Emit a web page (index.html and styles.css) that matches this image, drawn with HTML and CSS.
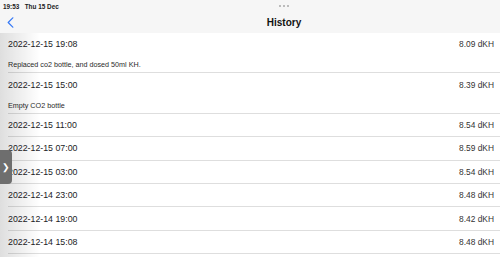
FILE: index.html
```html
<!DOCTYPE html>
<html lang="en">
<head>
  <meta charset="UTF-8">
  <meta name="viewport" content="width=device-width, initial-scale=1.0">
  <title>History</title>
  <link rel="stylesheet" href="styles.css">
</head>
<body>
  <header class="topbar">
    <div class="status">
      <span class="clock">19:53&nbsp;&nbsp;&nbsp;Thu 15 Dec</span>
      <span class="dots"><i></i><i></i><i></i></span>
    </div>
    <nav class="nav">
      <a class="back" href="#">
        <svg width="7" height="11" viewBox="0 0 7 11">
          <path d="M5.8 0.8 L1.2 5.5 L5.8 10.2" fill="none" stroke="#3478f6" stroke-width="1.2" stroke-linecap="round" stroke-linejoin="round"/>
        </svg>
      </a>
      <h1 class="title">History</h1>
    </nav>
  </header>

  <main class="list">
    <div class="row">
      <div class="main"><span class="date">2022-12-15 19:08</span><span class="value">8.09 dKH</span></div>
      <div class="note">Replaced co2 bottle, and dosed 50ml KH.</div>
    </div>
    <div class="row">
      <div class="main"><span class="date">2022-12-15 15:00</span><span class="value">8.39 dKH</span></div>
      <div class="note">Empty CO2 bottle</div>
    </div>
    <div class="row">
      <div class="main"><span class="date">2022-12-15 11:00</span><span class="value">8.54 dKH</span></div>
    </div>
    <div class="row">
      <div class="main"><span class="date">2022-12-15 07:00</span><span class="value">8.59 dKH</span></div>
    </div>
    <div class="row">
      <div class="main"><span class="date">2022-12-15 03:00</span><span class="value">8.54 dKH</span></div>
    </div>
    <div class="row">
      <div class="main"><span class="date">2022-12-14 23:00</span><span class="value">8.48 dKH</span></div>
    </div>
    <div class="row">
      <div class="main"><span class="date">2022-12-14 19:00</span><span class="value">8.42 dKH</span></div>
    </div>
    <div class="row">
      <div class="main"><span class="date">2022-12-14 15:08</span><span class="value">8.48 dKH</span></div>
    </div>
  </main>

  <!-- side panel shadow and pull tab -->
  <div class="shade"></div>
  <div class="handle">&#10095;</div>
</body>
</html>
```

FILE: styles.css
```css
body {
  font-family: 'Liberation Sans', Arial, sans-serif;
  background-color: #ffffff;
  color: #1c1c1e;
  margin: 0;
  padding: 0;
  height: 257px;
  overflow: hidden;
}

.topbar {
  background-color: #f6f6f6;
  height: 33px;
}

.status {
  height: 12px;
  display: flex;
  align-items: center;
  padding-left: 3px;
  font-size: 6.4px;
  font-weight: bold;
  color: #222;
}

.clock {
  width: 65px;
}

.dots {
  flex: 1;
  display: flex;
  justify-content: center;
  gap: 2px;
}

.dots i {
  width: 2px;
  height: 2px;
  border-radius: 50%;
  background-color: #a8a8a8;
}

.nav {
  height: 21px;
  display: flex;
  align-items: center;
}

.back {
  width: 68px;
  padding-left: 7px;
  box-sizing: border-box;
  display: flex;
  align-items: center;
}

.title {
  flex: 1;
  margin: 0;
  text-align: center;
  font-size: 10px;
  font-weight: bold;
  color: #111;
}

.row {
  margin-left: 8px;
  padding-right: 6px;
  border-bottom: 1px solid #dedede;
}

.main {
  height: 22.4px;
  display: flex;
  align-items: center;
  justify-content: space-between;
}

.date {
  font-size: 8.8px;
  color: #1c1c1e;
}

.value {
  font-size: 8.4px;
  color: #333;
}

.note {
  font-size: 7.2px;
  line-height: 10px;
  padding: 5px 0 2px;
  color: #2a2a2a;
}

.shade {
  position: absolute;
  left: 0;
  top: 33px;
  width: 40px;
  height: 224px;
  background: linear-gradient(to right, rgba(0, 0, 0, 0.13), rgba(0, 0, 0, 0));
  pointer-events: none;
}

.handle {
  position: absolute;
  left: 0;
  top: 150px;
  width: 12px;
  height: 34px;
  border-radius: 0 4px 4px 0;
  background-color: #6e6e6e;
  color: #fff;
  font-size: 9px;
  display: flex;
  align-items: center;
  justify-content: center;
}
```
